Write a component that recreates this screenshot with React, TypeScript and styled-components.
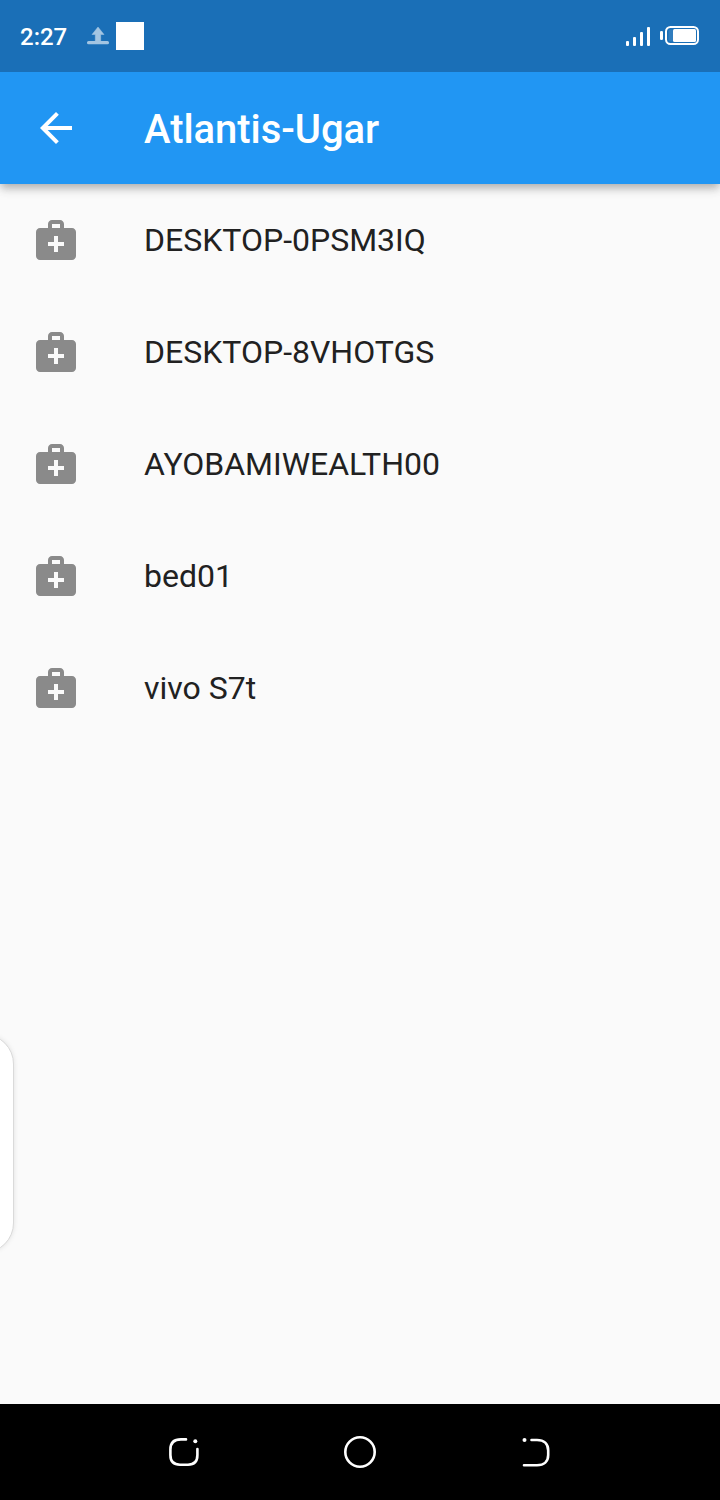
import React from "react";
import styled, { createGlobalStyle } from "styled-components";

const GlobalStyle = createGlobalStyle`
  * { box-sizing: border-box; }
  body { margin: 0; background: #fafafa; font-family: Roboto, "Liberation Sans", sans-serif; }
  svg { display: block; flex: none; }
`;

const Screen = styled.div`
  position: relative;
  display: flex;
  flex-direction: column;
  width: 720px;
  height: 1500px;
  overflow: hidden;
  background: #fafafa;
`;

const Header = styled.header`
  position: relative;
  flex: none;
  color: #fff;
  background: #2196f3;
  box-shadow: 0 4px 8px -2px rgba(0, 0, 0, 0.2), 0 6px 9px 0 rgba(0, 0, 0, 0.12),
    0 2px 16px 0 rgba(0, 0, 0, 0.06);
  clip-path: inset(0 0 -20px 0);
`;

const StatusBar = styled.div`
  display: flex;
  align-items: center;
  justify-content: space-between;
  height: 72px;
  padding: 0 20px;
  background: #1a6fb7;
`;

const StatusGroup = styled.div`
  display: flex;
  align-items: center;
`;

const Clock = styled.time`
  width: 66px;
  font-size: 24px;
  line-height: 28px;
  font-weight: 500;
  padding-top: 2px;
`;

const AppSquare = styled.span`
  width: 28px;
  height: 28px;
  margin-left: 6px;
  background: #fff;
`;

const AppBar = styled.div`
  display: flex;
  align-items: center;
  height: 112px;
  padding: 0 32px;
  gap: 64px;
`;

const BackButton = styled.button`
  padding: 0;
  border: 0;
  color: inherit;
  background: none;
`;

const Title = styled.h1`
  margin: 0;
  padding-top: 4px;
  font-size: 40px;
  line-height: 48px;
  font-weight: 500;
  letter-spacing: -0.05px;
`;

const DeviceList = styled.ul`
  flex: 1;
  margin: 0;
  padding: 0;
  list-style: none;
`;

const DeviceRow = styled.li`
  display: flex;
  align-items: center;
  gap: 64px;
  height: 112px;
  padding: 0 32px;
  color: #212121;
  font-size: 32px;
  line-height: 38px;
`;

const EdgePanel = styled.aside`
  position: absolute;
  top: 1034px;
  left: -46px;
  width: 60px;
  height: 219px;
  border: 1px solid #dadada;
  border-radius: 30px;
  background: #fff;
  box-shadow: 0 0 5px rgba(0, 0, 0, 0.1);
`;

const NavBar = styled.nav`
  display: flex;
  flex: none;
  align-items: center;
  justify-content: center;
  gap: 136px;
  height: 96px;
  background: #000;
`;

const devices = ["DESKTOP-0PSM3IQ", "DESKTOP-8VHOTGS", "AYOBAMIWEALTH00", "bed01", "vivo S7t"];

const UploadIcon = () => (
  <svg width="24" height="24" viewBox="0 0 24 24" fill="#a3c5e2">
    <path d="M12 3 18 10.5H14.7V17H9.3V10.5H6Z" stroke="#a3c5e2" strokeWidth=".5" strokeLinejoin="round" />
    <rect x="1" y="17" width="22" height="3.3" rx="1.5" />
  </svg>
);

const SignalIcon = () => (
  <svg width="25" height="20" viewBox="0 0 25 20" fill="#fff">
    <rect x="0" y="15" width="3" height="5" rx="1" />
    <rect x="7" y="11" width="3" height="9" rx="1" />
    <rect x="14" y="6" width="3" height="14" rx="1" />
    <rect x="21" y="1" width="3" height="19" rx="1" />
  </svg>
);

const BatteryIcon = () => (
  <svg width="40" height="20" viewBox="0 0 40 20" fill="#fff">
    <rect x="0" y="5" width="3" height="9" rx="1.3" />
    <rect x="6" y="1" width="32" height="17" rx="4.5" fill="none" stroke="#fff" strokeWidth="2" />
    <rect x="8.5" y="3.5" width="6" height="12" rx="2" opacity=".1" />
    <rect x="13" y="3" width="23" height="13" rx="1.5" />
  </svg>
);

const BackIcon = () => (
  <svg width="48" height="48" viewBox="0 0 24 24" fill="currentColor">
    <path d="M20 11H7.83l5.59-5.59L12 4l-8 8 8 8 1.41-1.41L7.83 13H20v-2z" />
  </svg>
);

const KitIcon = () => (
  <svg width="48" height="48" viewBox="0 0 24 24" fill="#8a8a8a">
    <path d="M20 6h-4V4c0-1.1-.9-2-2-2h-4c-1.1 0-2 .9-2 2v2H4c-1.1 0-2 .9-2 2v12c0 1.1.9 2 2 2h16c1.1 0 2-.9 2-2V8c0-1.1-.9-2-2-2zM10 4h4v2h-4V4zm6 11h-3v3h-2v-3H8v-2h3v-3h2v3h3v2z" />
  </svg>
);

const RecentsIcon = () => (
  <svg width="40" height="40" viewBox="0 0 40 40" fill="none" stroke="#fff" strokeWidth="2.6" strokeLinecap="round">
    <path d="M22 7.4H17C10 7.4 6.4 11 6.4 17.5V23C6.4 29.5 10 32.7 16 32.7H24C30 32.7 33.4 29.5 33.4 23V17" />
    <circle cx="31.3" cy="9.3" r="2" fill="#fff" stroke="none" />
  </svg>
);

const HomeIcon = () => (
  <svg width="40" height="40" viewBox="0 0 40 40" fill="none" stroke="#fff" strokeWidth="2.6">
    <circle cx="20" cy="20" r="14.7" />
  </svg>
);

const ReturnIcon = () => (
  <svg width="40" height="40" viewBox="0 0 40 40" fill="none" stroke="#fff" strokeWidth="2.6" strokeLinecap="round">
    <path d="M15.5 8H21C28 8 32.2 12 32.2 18.5V23C32.2 29.5 28 33.3 21 33.3H8" />
    <circle cx="8.5" cy="8" r="2" fill="#fff" stroke="none" />
  </svg>
);

const Battery = styled.span`
  margin-left: 9px;
`;

export default function App() {
  return (
    <Screen>
      <GlobalStyle />
      <Header>
        <StatusBar>
          <StatusGroup>
            <Clock>2:27</Clock>
            <UploadIcon />
            <AppSquare />
          </StatusGroup>
          <StatusGroup>
            <SignalIcon />
            <Battery>
              <BatteryIcon />
            </Battery>
          </StatusGroup>
        </StatusBar>
        <AppBar>
          <BackButton aria-label="Back">
            <BackIcon />
          </BackButton>
          <Title>Atlantis-Ugar</Title>
        </AppBar>
      </Header>
      <DeviceList>
        {devices.map((name) => (
          <DeviceRow key={name}>
            <KitIcon />
            {name}
          </DeviceRow>
        ))}
      </DeviceList>
      <EdgePanel />
      <NavBar>
        <RecentsIcon />
        <HomeIcon />
        <ReturnIcon />
      </NavBar>
    </Screen>
  );
}
